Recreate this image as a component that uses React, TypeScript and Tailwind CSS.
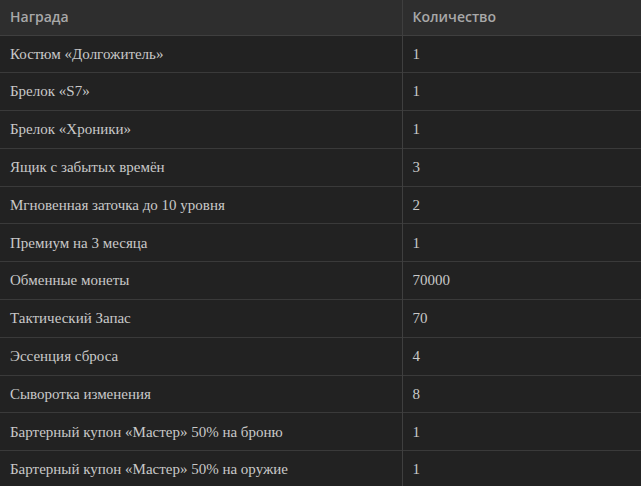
import React from "react"

const rewards = [
  { name: "Костюм «Долгожитель»", count: "1" },
  { name: "Брелок «S7»", count: "1" },
  { name: "Брелок «Хроники»", count: "1" },
  { name: "Ящик с забытых времён", count: "3" },
  { name: "Мгновенная заточка до 10 уровня", count: "2" },
  { name: "Премиум на 3 месяца", count: "1" },
  { name: "Обменные монеты", count: "70000" },
  { name: "Тактический Запас", count: "70" },
  { name: "Эссенция сброса", count: "4" },
  { name: "Сыворотка изменения", count: "8" },
  { name: "Бартерный купон «Мастер» 50% на броню", count: "1" },
  { name: "Бартерный купон «Мастер» 50% на оружие", count: "1" },
]

const App = () => {
  return (
    <div className="w-[641px] h-[486px] overflow-hidden bg-[#222222]">
      <table className="w-full border-collapse">
        <thead>
          <tr className="bg-[#2e2e2e] h-[35px] border-b border-[#3f3f3f]">
            <th className="w-[402px] border-r border-[#3f3f3f] px-[10px] pb-[2px] text-left align-middle font-['Open_Sans',sans-serif] text-[14px] font-semibold text-[#a8a8a8]">
              Награда
            </th>
            <th className="px-[10px] pb-[2px] text-left align-middle font-['Open_Sans',sans-serif] text-[14px] font-semibold text-[#a8a8a8]">
              Количество
            </th>
          </tr>
        </thead>
        <tbody>
          {rewards.map((r, idx) => (
            <tr key={idx} className="h-[37.8px] border-b border-[#3a3a3a]">
              <td className="border-r border-[#3f3f3f] px-[10px] align-middle font-['Liberation_Serif',serif] text-[15px] text-[#c9c9c9]">
                {r.name}
              </td>
              <td className="px-[10px] align-middle font-['Liberation_Serif',serif] text-[15px] text-[#c9c9c9]">
                {r.count}
              </td>
            </tr>
          ))}
        </tbody>
      </table>
    </div>
  )
}

export default App
